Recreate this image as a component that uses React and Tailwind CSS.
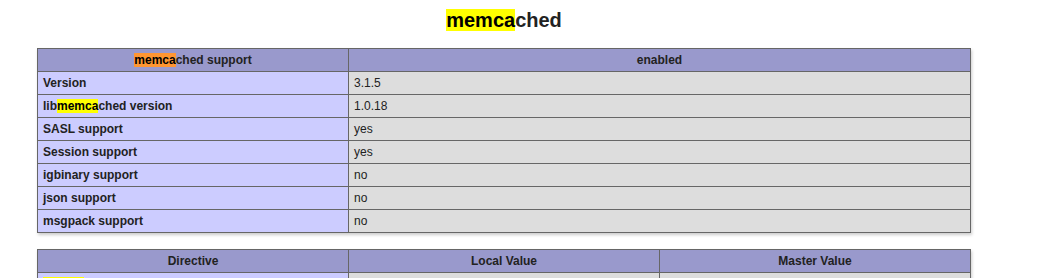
import React from 'react';

const Hit = ({ active, children }) => (
  <span className={active ? 'bg-[#ff9632] text-black' : 'bg-[#ffff00] text-black'}>{children}</span>
);

const rows = [
  ['Version', '3.1.5'],
  [<>lib<Hit>memca</Hit>ched version</>, '1.0.18'],
  ['SASL support', 'yes'],
  ['Session support', 'yes'],
  ['igbinary support', 'no'],
  ['json support', 'no'],
  ['msgpack support', 'no'],
];

const th = 'border border-[#666] bg-[#99c] px-[5px] py-[4px] text-[12px] leading-[14px] font-bold text-center align-baseline';
const e = 'border border-[#666] bg-[#ccf] w-[311px] px-[5px] py-[4px] text-[12px] leading-[14px] font-bold text-left align-baseline';
const v = 'border border-[#666] bg-[#ddd] px-[5px] py-[4px] text-[12px] leading-[14px] text-left align-baseline';

export default function App() {
  return (
    <div className="w-[1008px] h-[278px] overflow-hidden bg-white text-[#222]" style={{ fontFamily: '"Liberation Sans", Arial, sans-serif' }}>
      <h2 className="pt-[9px] text-center text-[20px] leading-[23px] font-bold">
        <Hit>memca</Hit>ched
      </h2>

      <table className="mt-[16px] ml-[37px] w-[934px] border-collapse shadow-[1px_2px_3px_#ccc]">
        <tbody>
          <tr>
            <th className={th + ' w-[311px]'}><Hit active>memca</Hit>ched support</th>
            <th className={th}>enabled</th>
          </tr>
          {rows.map((r, i) => (
            <tr key={i}>
              <td className={e}>{r[0]}</td>
              <td className={v}>{r[1]}</td>
            </tr>
          ))}
        </tbody>
      </table>

      <table className="mt-[16px] ml-[37px] w-[934px] border-collapse shadow-[1px_2px_3px_#ccc]">
        <tbody>
          <tr>
            <th className={th + ' w-[311px]'}>Directive</th>
            <th className={th + ' w-[311px]'}>Local Value</th>
            <th className={th}>Master Value</th>
          </tr>
          <tr>
            <td className={e}><Hit>memca</Hit>ched.compression_factor</td>
            <td className={v}>1.3</td>
            <td className={v}>1.3</td>
          </tr>
        </tbody>
      </table>
    </div>
  );
}
